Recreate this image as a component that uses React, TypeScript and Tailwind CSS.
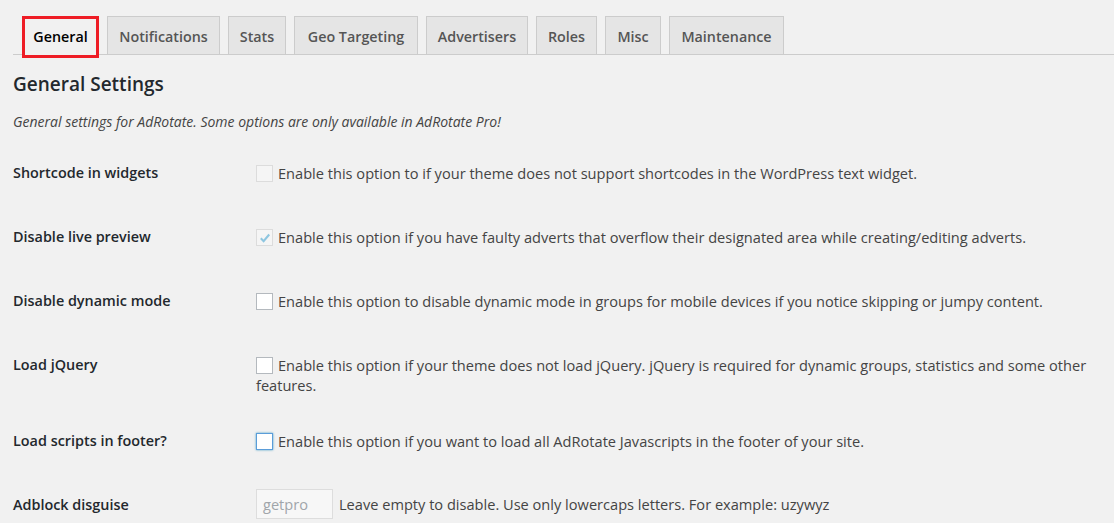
import React from "react";

const tabs: { name: string; w: string }[] = [
  { name: "General", w: "w-[77px]" },
  { name: "Notifications", w: "w-[113px]" },
  { name: "Stats", w: "w-[58px]" },
  { name: "Geo Targeting", w: "w-[124px]" },
  { name: "Advertisers", w: "w-[102px]" },
  { name: "Roles", w: "w-[61px]" },
  { name: "Misc", w: "w-[56px]" },
  { name: "Maintenance", w: "w-[115px]" },
];

type Box = "disabled" | "disabledChecked" | "normal" | "focus";

function Check({ kind }: { kind: Box }) {
  const cls =
    kind === "focus"
      ? "border-[#5b9dd9] bg-white shadow-[0_0_2px_rgba(30,140,190,0.8)]"
      : kind === "normal"
      ? "border-[#b4b9be] bg-white"
      : "border-[#dcdcdc] bg-[#f5f5f5]";
  return (
    <span
      className={`relative mr-[5px] inline-block h-[17px] w-[17px] border align-[-3px] ${cls}`}
    >
      {kind === "disabledChecked" && (
        <svg viewBox="0 0 20 20" className="absolute left-[1px] top-[1px] h-[14px] w-[14px]">
          <path d="M4 10.5 L8 14.5 L16 5" fill="none" stroke="#8ec6e0" strokeWidth="3" />
        </svg>
      )}
    </span>
  );
}

function Row({ label, children }: { label: string; children: React.ReactNode }) {
  return (
    <div className="flex items-start">
      <div className="w-[243px] shrink-0 py-[22px] text-[14.4px] font-semibold leading-[20px] text-[#23282d]">
        {label}
      </div>
      <div className="flex-1 pb-[14px] pr-[20px] pt-[22px] text-[14.6px] leading-[20px] text-[#444]">
        {children}
      </div>
    </div>
  );
}

export default function App() {
  return (
    <div className="h-[523px] w-[1114px] overflow-hidden bg-[#f1f1f1] font-['Open_Sans',sans-serif] text-[#444]">
      <div className="ml-[13px] flex gap-[8px] border-b border-[#ccc] pl-[9px] pt-[16px]">
        {tabs.map((t, i) => (
          <div
            key={t.name}
            className={`relative -mb-px flex h-[39px] items-center justify-center border border-[#ccc] pt-[2px] text-[14.3px] font-semibold ${t.w} ${
              i === 0 ? "border-b-[#f1f1f1] bg-[#f1f1f1] text-[#000]" : "bg-[#e5e5e5] text-[#555]"
            }`}
          >
            {t.name}
            {i === 0 && (
              <span className="absolute -bottom-[4px] -left-[1px] -right-[1px] -top-[1px] border-[3px] border-[#ee1c25]" />
            )}
          </div>
        ))}
      </div>
      <div className="pl-[13px]">
        <h2 className="mt-[15px] text-[19px] font-semibold leading-[28px] text-[#23282d]">General Settings</h2>
        <p className="mt-[14px] text-[14px] italic leading-[20px] text-[#444]">
          General settings for AdRotate. Some options are only available in AdRotate Pro!
        </p>
        <div className="mt-[9px]">
          <Row label="Shortcode in widgets">
            <Check kind="disabled" />
            Enable this option to if your theme does not support shortcodes in the WordPress text widget.
          </Row>
          <Row label="Disable live preview">
            <Check kind="disabledChecked" />
            Enable this option if you have faulty adverts that overflow their designated area while creating/editing adverts.
          </Row>
          <Row label="Disable dynamic mode">
            <Check kind="normal" />
            Enable this option to disable dynamic mode in groups for mobile devices if you notice skipping or jumpy content.
          </Row>
          <Row label="Load jQuery">
            <Check kind="normal" />
            Enable this option if your theme does not load jQuery. jQuery is required for dynamic groups, statistics and some other features.
          </Row>
          <Row label="Load scripts in footer?">
            <Check kind="focus" />
            Enable this option if you want to load all AdRotate Javascripts in the footer of your site.
          </Row>
          <div className="flex items-start">
            <div className="w-[243px] shrink-0 py-[22px] text-[14.4px] font-semibold leading-[20px] text-[#23282d]">
              Adblock disguise
            </div>
            <div className="flex items-center pt-[16px] text-[14.6px] leading-[20px] text-[#444]">
              <div className="flex h-[30px] w-[77px] items-center border border-[#ddd] bg-[#f7f7f7] px-[6px] text-[#a0a5aa]">
                getpro
              </div>
              <span className="ml-[6px]">Leave empty to disable. Use only lowercaps letters. For example: uzywyz</span>
            </div>
          </div>
        </div>
      </div>
    </div>
  );
}
